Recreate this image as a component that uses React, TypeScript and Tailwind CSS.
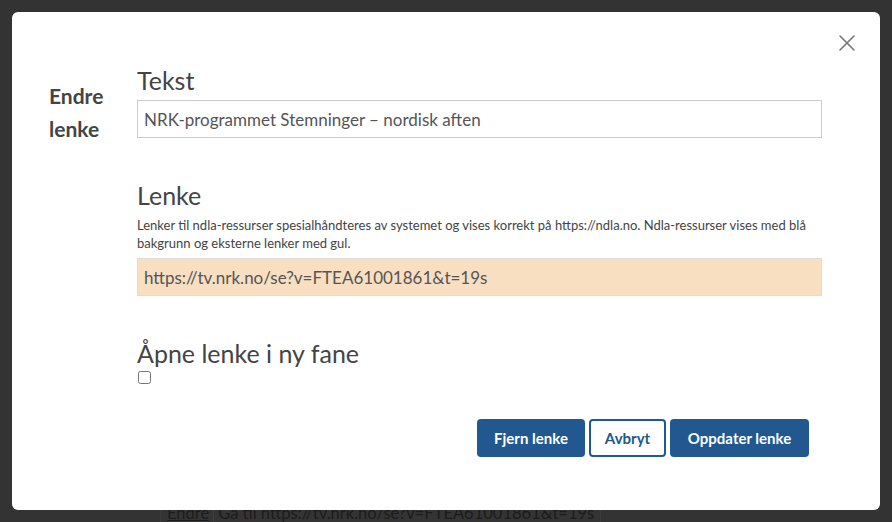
import { X } from "lucide-react";

function App() {
  return (
    <div className="relative w-[892px] h-[522px] overflow-hidden bg-[#333333] font-['Lato','Noto_Sans',sans-serif]">
      {/* page behind the overlay */}
      <div className="absolute left-[160px] top-[498px] h-[30px] px-[6px] border-x border-[#3b3b3b] bg-[#343434] text-[16.5px] leading-[30px] text-[#1c1c1c] whitespace-nowrap">
        <span className="underline">Endre</span>
        <span className="mx-[4px] border-l border-[#3e3e3e]" />
        Gå til https://tv.nrk.no/se?v=FTEA61001861&amp;t=19s
      </div>

      <div className="absolute inset-0 p-3">
        <div className="relative w-[868px] h-[498px] rounded-md bg-white flex">
          <button className="absolute right-[19px] top-[17px] text-[#777]">
            <X size={28} strokeWidth={1.4} />
          </button>

          <div className="w-[125px] pl-[37px] pt-[67px]">
            <h1 className="text-[21px] leading-[33px] font-bold text-[#444]">
              Endre lenke
            </h1>
          </div>

          <form className="w-[685px] pt-[53px] flex flex-col text-[#444]">
            <label className="text-[25px] leading-[30px] mb-[5px]">Tekst</label>
            <input
              defaultValue="NRK-programmet Stemninger – nordisk aften"
              className="h-[38px] w-full border border-[#cccccc] px-[6px] text-[17px] text-[#555] outline-none"
            />

            <label className="mt-[42px] text-[25px] leading-[30px]">Lenke</label>
            <p className="mt-[6px] text-[13px] leading-[18px] text-[#444]">
              Lenker til ndla-ressurser spesialhåndteres av systemet og vises korrekt på https://ndla.no. Ndla-ressurser vises med blå bakgrunn og eksterne lenker med gul.
            </p>
            <input
              defaultValue="https://tv.nrk.no/se?v=FTEA61001861&t=19s"
              className="mt-[6px] h-[38px] w-full border border-[#dddddd] bg-[#f8dfc2] px-[6px] text-[17px] text-[#555] outline-none"
            />

            <label className="mt-[42px] text-[25px] leading-[30px]">Åpne lenke i ny fane</label>
            <input type="checkbox" className="mt-[3px] ml-[1px] w-[13px] h-[13px] self-start" />

            <div className="mt-[35px] flex justify-end gap-[4px] pr-[13px]">
              <button type="button" className="h-[38px] w-[108px] rounded-[4px] bg-[#20588f] text-[15px] font-bold text-white">
                Fjern lenke
              </button>
              <button type="button" className="h-[38px] w-[77px] rounded-[4px] border-2 border-[#20588f] bg-white text-[15px] font-bold text-[#20588f]">
                Avbryt
              </button>
              <button type="button" className="h-[38px] w-[139px] rounded-[4px] bg-[#20588f] text-[15px] font-bold text-white">
                Oppdater lenke
              </button>
            </div>
          </form>
        </div>
      </div>
    </div>
  );
}

export default App;
